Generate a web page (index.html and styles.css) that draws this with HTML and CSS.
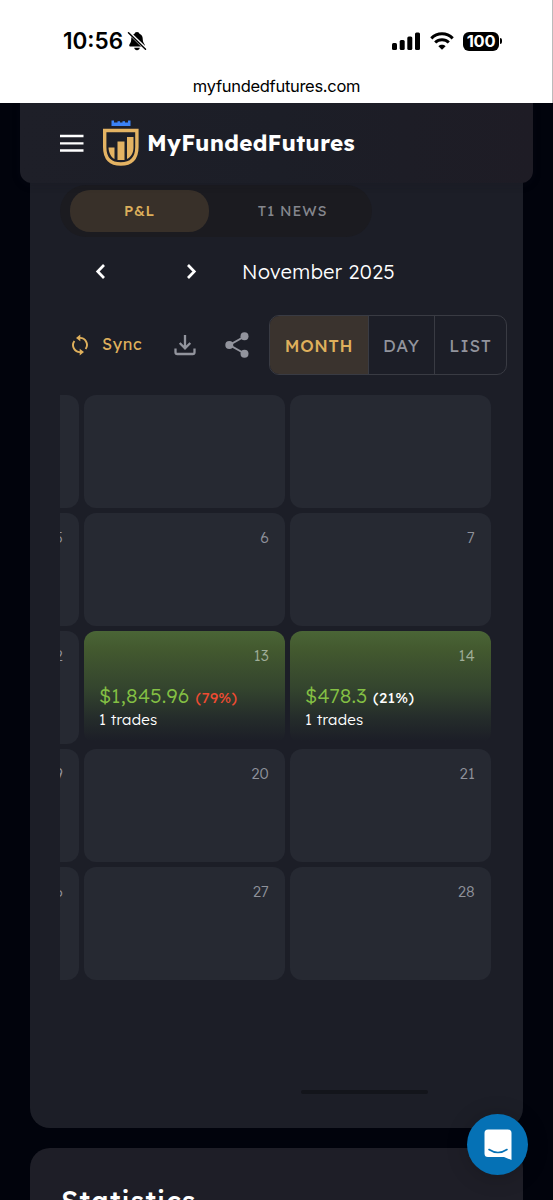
FILE: index.html
```html
<!DOCTYPE html>
<html lang="en">
<head>
<meta charset="utf-8">
<meta name="viewport" content="width=device-width, initial-scale=1">
<title>MyFundedFutures</title>
<link rel="stylesheet" href="styles.css">
</head>
<body>
<div class="browser">
  <div class="status">
    <div class="status-left">
      <span class="clock">10:56</span>
      <svg class="bell" width="20" height="20" viewBox="0 0 20 20">
        <path d="M10 1C11.500 1 12.300 2 12.500 2.800C15 3.800 15.800 6 15.800 9C15.800 11.800 17.800 12.800 17.800 14.600C17.800 15.200 17.400 15.500 16.900 15.500H3.100C2.600 15.500 2.200 15.200 2.200 14.600C2.200 12.800 4.200 11.800 4.200 9C4.200 6 5 3.800 7.500 2.800C7.700 2 8.500 1 10 1ZM7.200 16.700H12.800C12.600 18.200 11.500 19.200 10 19.200C8.500 19.200 7.400 18.200 7.200 16.700Z"/>
        <path d="M1.800 1.300L19 18" stroke="#fff" stroke-width="3.200"/>
        <path d="M1.500 1.800L18.500 18.300" stroke="#000" stroke-width="1.500" stroke-linecap="round"/>
      </svg>
    </div>
    <div class="status-right">
      <svg width="28" height="18" viewBox="0 0 28 18"><rect x="0" y="11" width="5" height="7" rx="1.500"/><rect x="7.700" y="8" width="5" height="10" rx="1.500"/><rect x="15.300" y="4.500" width="5" height="13.500" rx="1.500"/><rect x="23" y="0.500" width="5" height="17.500" rx="1.500"/></svg>
      <svg width="24" height="18" viewBox="0 0 24 18" fill="none" stroke="#000" stroke-width="3"><path d="M1.300 6.400C7.300 .3 16.700 .3 22.700 6.400"/><path d="M5.200 10.500C9 6.800 15 6.800 18.800 10.500"/><path d="M12 17.800L8.400 14.200C10.500 12.300 13.500 12.300 15.600 14.200Z" fill="#000" stroke="none"/></svg>
      <div class="battery"><span class="battery-level">100</span><i class="battery-tip"></i></div>
    </div>
  </div>
  <div class="address">myfundedfutures.com</div>
</div>
<main class="page">
  <header class="topbar">
    <svg class="menu" width="24" height="18" viewBox="0 0 24 18" stroke="#fff" stroke-width="2.300"><path d="M0 2H23.500M0 9.300H23.500M0 16.500H23.500"/></svg>
    <svg class="logo" width="38" height="48" viewBox="0 0 38 48">
      <path d="M9.500 1.500H12V3.500H15.500V2.300H18V3.500H20.500V2.300H23V3.500H26V1.500H28.500V7H9.500Z" fill="#3b82f6"/>
      <path d="M2.700 11.500H34.900V28C34.900 40 29 45 18.800 45S2.700 40 2.700 28Z" fill="none" stroke="#e4b363" stroke-width="3.400"/>
      <path d="M6.500 28.500H12.500V40C9 38 6.800 34 6.500 28.500ZM15.500 22.500H22.500V41H15.500ZM25 18H31.500V29C31.300 34.500 29 38 25 40Z" fill="#e4b363"/>
    </svg>
    <span class="brand">MyFundedFutures</span>
  </header>
  <section class="card calendar">
    <div class="tabs"><span class="tab tab-active">P&amp;L</span><span class="tab">T1 NEWS</span></div>
    <div class="month-nav">
      <svg width="12" height="16" viewBox="0 0 12 16"><path d="M10 2L3.700 8.500L10 15"/></svg>
      <svg width="12" height="16" viewBox="0 0 12 16"><path d="M3 2L9.300 8.500L3 15"/></svg>
      <span class="month-title">November 2025</span>
    </div>
    <div class="toolbar">
      <svg class="sync-icon" width="18" height="22" viewBox="0 0 18 22"><path d="M4 15.900A6.900 6.900 0 0 1 3.600 6.300M8.600 3.900A6.900 6.900 0 0 1 14.200 15.700M9 18A6.900 6.900 0 0 1 3.800 15.500" transform="rotate(0)" fill="none" stroke="none"/><path d="M8.500 3.900A7 7 0 0 1 14.600 15M9.500 18.100A7 7 0 0 1 3.400 7" fill="none" stroke="#dfb05c" stroke-width="1.900"/><path d="M5 3.900L9.300 .6V7.200ZM13 18.100L8.700 14.800V21.400Z" fill="#dfb05c"/></svg>
      <span class="sync">Sync</span>
      <svg class="download" width="22" height="22" viewBox="0 0 22 22" fill="none" stroke="#92949d" stroke-width="2.300"><path d="M11 1V14M5.700 9L11 14.300L16.300 9M1.500 14.500V18.200Q1.500 20 3.300 20H18.700Q20.500 20 20.500 18.200V14.500"/></svg>
      <svg class="share" width="24" height="26" viewBox="0 0 24 26"><path d="M19.500 4.500L4.500 13L19.500 21.500" fill="none" stroke="#92949d" stroke-width="2"/><g fill="#92949d"><circle cx="19.500" cy="4.200" r="4"/><circle cx="4.300" cy="13" r="4"/><circle cx="19.500" cy="21.800" r="4"/></g></svg>
      <div class="views"><span class="view view-month">MONTH</span><span class="view view-day">DAY</span><span class="view view-list">LIST</span></div>
    </div>
    <div class="scroller">
      <div class="grid">
        <div class="day"></div><div class="day"></div><div class="day"></div>
        <div class="day"><span class="num">5</span></div><div class="day"><span class="num">6</span></div><div class="day"><span class="num">7</span></div>
        <div class="day"><span class="num">12</span></div>
        <div class="day win"><span class="num">13</span><div class="pnl"><span class="amount">$1,845.96</span><span class="pct loss">(79%)</span></div><span class="trades">1 trades</span></div>
        <div class="day win"><span class="num">14</span><div class="pnl"><span class="amount">$478.3</span><span class="pct">(21%)</span></div><span class="trades">1 trades</span></div>
        <div class="day"><span class="num">19</span></div><div class="day"><span class="num">20</span></div><div class="day"><span class="num">21</span></div>
        <div class="day"><span class="num">26</span></div><div class="day"><span class="num">27</span></div><div class="day"><span class="num">28</span></div>
      </div>
    </div>
    <div class="scroll-thumb"></div>
  </section>
  <section class="card stats"><h2 class="stats-title">Statistics</h2></section>
  <div class="chat">
    <svg width="28" height="32" viewBox="0 0 28 32"><path d="M4 .5H24Q27.500 .5 27.500 4V31L20 28H4Q.5 28 .5 24.500V4Q.5 .5 4 .5Z" fill="#fff"/><path d="M5 20.500Q14 26.500 23 20.500" fill="none" stroke="#0571b5" stroke-width="1.600" stroke-linecap="round"/></svg>
  </div>
</main>
</body>
</html>
```
FILE: styles.css
```css
* { box-sizing: border-box; }
body { margin: 0; width: 553px; height: 1200px; overflow: hidden; background: #01030c; color: #fff; font-family: Lexend, Inter, "Liberation Sans", sans-serif; }
svg { display: block; flex: none; }

.browser { height: 103px; background: #fff; color: #000; border-right: 1px solid #bbb; }
.status { height: 73px; padding: 9px 50px 0 63px; display: flex; justify-content: space-between; align-items: center; }
.status-left { display: flex; align-items: center; gap: 4px; }
.clock { width: 60px; font: 600 22.5px/26px Inter, sans-serif; letter-spacing: 0; white-space: nowrap; }
.status-right { display: flex; align-items: center; gap: 9.500px; }
.battery { display: flex; align-items: center; gap: 1px; }
.battery-level { width: 36px; height: 19px; border-radius: 6px; background: #000; color: #fff; font: 700 16.5px/19px Inter, sans-serif; letter-spacing: -0.3px; text-align: center; }
.battery-tip { width: 2px; height: 6px; border-radius: 0 2px 2px 0; background: #000; }
.address { height: 27px; padding-left: 1px; font: 400 16.5px/27px Inter, sans-serif; letter-spacing: -0.3px; text-align: center; }

.page { position: relative; height: 1097px; padding: 0 30px; overflow: hidden; }
.topbar { position: absolute; z-index: 2; top: 0; left: 20px; width: 513px; height: 80px; padding: 0 40px; display: flex; align-items: center; background: linear-gradient(90deg, #1e1f28, #1c1e27 50%, #1e1c25); border-radius: 0 0 12px 12px; box-shadow: 0 2px 8px rgba(20, 21, 28, .2); }
.logo { margin-left: 18px; }
.brand { margin-left: 7px; font-size: 22.5px; font-weight: 700; line-height: 30px; letter-spacing: .25px; white-space: nowrap; }

.card { background: #1c1e27; }
.calendar { height: 1025px; padding: 82px 16px 0 30px; border-radius: 0 0 20px 20px; }
.tabs { width: 312px; height: 52px; padding: 5px 9px 5px 10px; display: flex; background: #1b1b20; border-radius: 26px; }
.tab { width: 139px; height: 42px; padding-bottom: 2px; display: flex; align-items: center; justify-content: center; border-radius: 20px; color: #85878e; font-size: 14.5px; font-weight: 450; letter-spacing: .9px; }
.tab + .tab { width: 154px; padding-left: 13px; }
.tab-active { background: #383029; color: #dcae5b; font-weight: 500; letter-spacing: .7px; }
.month-nav { height: 68px; padding-left: 34px; display: flex; align-items: center; }
.month-nav svg + svg { margin-left: 79px; }
.month-nav path { fill: none; stroke: #fff; stroke-width: 2.7; }
.month-title { margin-left: 45px; font-size: 19.6px; font-weight: 350; letter-spacing: .5px; white-space: nowrap; }
.toolbar { height: 60px; margin-top: 10px; padding-left: 11px; display: flex; align-items: center; }
.sync { width: 42px; margin-left: 13px; padding-bottom: 2px; color: #dfb05c; font-size: 16.2px; font-weight: 450; letter-spacing: .6px; white-space: nowrap; }
.download { margin-left: 30px; }
.share { margin-left: 29px; }
.views { width: 238px; height: 60px; margin-left: auto; display: flex; border: 1px solid #393b43; border-radius: 10px; overflow: hidden; }
.view { display: flex; flex: none; align-items: center; justify-content: center; color: #92949d; font-size: 17px; font-weight: 450; letter-spacing: .9px; }
.view + .view { border-left: 1px solid #393b43; }
.view-month { width: 98px; background: #3a332e; color: #dfb05c; font-weight: 500; letter-spacing: .7px; }
.view-day { width: 66px; }
.view-list { width: 72px; }

.scroller { width: 431px; height: 585px; margin-top: 20px; display: flex; justify-content: flex-end; overflow: hidden; }
.grid { flex: none; display: grid; grid-template-columns: repeat(3, 201px); grid-auto-rows: 113px; gap: 5px; }
.day { padding: 16px 16px 0 15px; display: flex; flex-direction: column; background: #262932; border-radius: 12px; }
.num { height: 20px; color: #8f929b; font-size: 15px; font-weight: 350; line-height: 17px; letter-spacing: .2px; text-align: right; }
.win { background: linear-gradient(#4a6536 0%, #43592f 16%, #34452e 50%, #252d2b 76%, #1c1e27 97%); }
.win .num { color: #a0ae99; }
.pnl { height: 27px; margin-top: 15px; display: flex; align-items: baseline; gap: 6px; white-space: nowrap; line-height: 27px; }
.amount { color: #84c044; font-size: 20px; font-weight: 300; letter-spacing: .2px; }
.pct { font-size: 15px; font-weight: 400; letter-spacing: .4px; }
.loss { color: #ef4b32; }
.trades { padding-top: 1px; line-height: 20px; font-size: 15px; font-weight: 300; letter-spacing: .3px; }
.scroll-thumb { width: 127px; height: 4px; margin: 110px 0 0 241px; border-radius: 2px; background: #13151b; }

.stats { height: 100px; margin-top: 20px; padding: 36px 31px 0; border-radius: 20px 20px 0 0; background: #1e1e27; }
.stats-title { margin: 0; font-size: 27.3px; font-weight: 500; line-height: 34px; letter-spacing: 1.2px; }
.chat { position: absolute; z-index: 3; left: 467px; top: 1011px; width: 61px; height: 61px; display: flex; align-items: center; justify-content: center; border-radius: 50%; background: #0571b5; box-shadow: 0 2px 22px rgba(0, 0, 0, .2); }
```
